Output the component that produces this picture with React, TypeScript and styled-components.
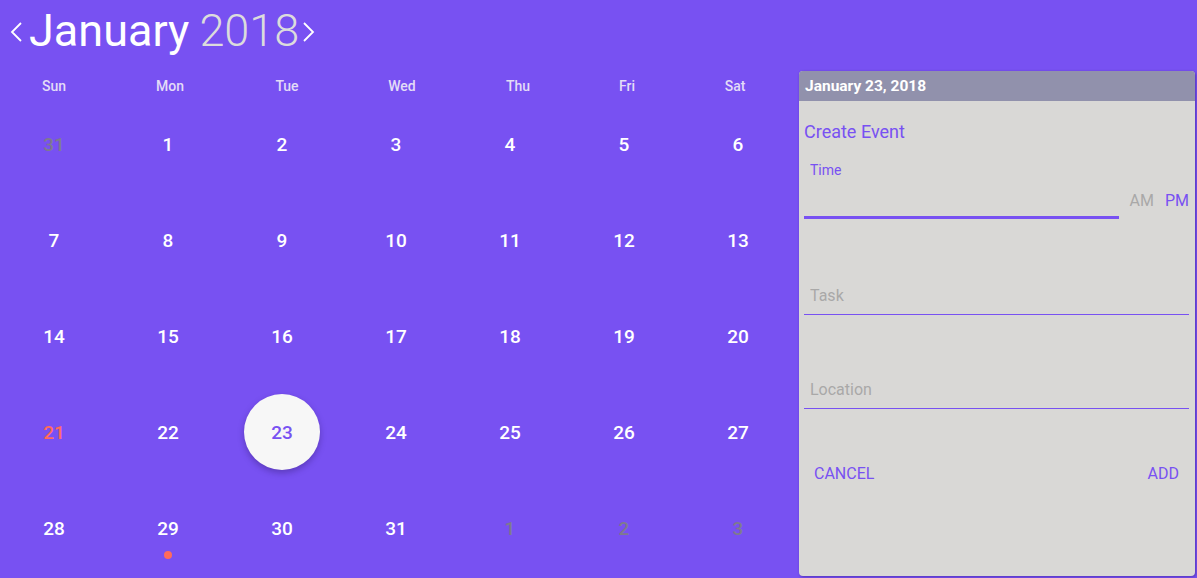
import React from 'react'
import styled, {createGlobalStyle} from "styled-components";

const GlobalStyle = createGlobalStyle`
  body {
    margin: 0;
    background-color: #7851f2;
    font-family: Roboto, "Liberation Sans", sans-serif;
    overflow: hidden;
  }
`;

const purple = '#7851f2';

const StyledPage = styled.div`
  display: flex;
  align-items: flex-start;
  width: 1197px;
  height: 578px;
`

const StyledCalendar = styled.div`
  width: 799px;
  flex-shrink: 0;
`;

const StyledTitle = styled.div`
  display: flex;
  align-items: center;
  height: 60px;
  padding-left: 9px;
  color: #fff;
  font-size: 45px;
  line-height: 1;
`;

const StyledMonth = styled.span`
  font-weight: 400;
  margin: 0 10px 0 6px;
`;

const StyledYear = styled.span`
  font-weight: 300;
  color: #dcdcdc;
  margin-right: 3px;
`;

const StyledArrow = styled.svg`
  width: 14px;
  height: 20px;
  margin-top: 4px;
`;

const StyledWeekdays = styled.div`
  display: grid;
  grid-template-columns: 108px 124px 110px 120px 112px 106px 110px;
  height: 28px;
  margin-top: 12px;
  align-items: center;
`;

const StyledWeekday = styled.div`
  text-align: center;
  color: #e3dcf7;
  font-size: 14px;
  font-weight: 500;
`;

const StyledDays = styled.div`
  display: grid;
  grid-template-columns: repeat(7, 114px);
  grid-auto-rows: 96px;
  margin-left: -3px;
`;

const StyledCell = styled.div`
  position: relative;
  display: flex;
  justify-content: center;
  padding-top: 6px;
`;

const StyledDay = styled.div<{ $muted?: boolean; $sunday?: boolean; $selected?: boolean }>`
  display: flex;
  align-items: center;
  justify-content: center;
  width: 76px;
  height: 76px;
  border-radius: 50%;
  font-size: 19px;
  font-weight: 500;
  color: ${p => p.$selected ? purple : p.$muted ? '#7f7a8e' : p.$sunday ? '#ff6b5b' : '#fff'};
  background: ${p => p.$selected ? '#f7f7f7' : 'transparent'};
  box-shadow: ${p => p.$selected ? '0 3px 6px rgba(40, 20, 90, 0.35)' : 'none'};
`;

const StyledDot = styled.span`
  position: absolute;
  left: 50%;
  top: 67px;
  width: 8px;
  height: 8px;
  margin-left: -4px;
  border-radius: 50%;
  background: #ff6b5b;
`;

const StyledPanel = styled.div`
  width: 396px;
  height: 505px;
  margin-top: 71px;
  border-radius: 4px;
  overflow: hidden;
  background: #d9d8d6;
  box-shadow: 1px 1px 3px rgba(40, 20, 110, 0.45);
`;

const StyledPanelHeader = styled.div`
  height: 30px;
  line-height: 30px;
  padding-left: 6px;
  background: #9191ac;
  color: #fff;
  font-size: 15.5px;
  font-weight: 700;
`;

const StyledPanelBody = styled.div`
  display: flex;
  flex-direction: column;
  padding: 0 6px 0 5px;
`;

const StyledHeading = styled.h3`
  margin: 20px 0 0 0;
  font-size: 18px;
  line-height: 22px;
  font-weight: 400;
  color: ${purple};
`;

const StyledLabel = styled.div`
  margin-top: 19px;
  padding-left: 6px;
  font-size: 14px;
  line-height: 16px;
  color: ${purple};
`;

const StyledTimeRow = styled.div`
  display: flex;
  align-items: center;
  height: 41px;
`;

const StyledTimeInput = styled.div`
  width: 315px;
  height: 100%;
  box-sizing: border-box;
  border-bottom: 3px solid ${purple};
`;

const StyledMeridiem = styled.span<{ $active?: boolean }>`
  margin-left: 11px;
  margin-top: 4px;
  font-size: 16px;
  color: ${p => p.$active ? purple : '#a9a8a8'};
`;

const StyledInput = styled.input<{ $gap: number }>`
  margin-top: ${p => p.$gap}px;
  height: 39px;
  box-sizing: border-box;
  padding: 0 6px;
  border: none;
  border-bottom: 1px solid ${purple};
  background: transparent;
  font-family: inherit;
  font-size: 16px;
  outline: none;
  &::placeholder {
    color: #a9a8a8;
  }
`;

const StyledActions = styled.div`
  display: flex;
  justify-content: space-between;
  margin-top: 46px;
`;

const StyledAction = styled.button`
  height: 36px;
  padding: 0 10px;
  border: none;
  background: transparent;
  font-family: inherit;
  font-size: 16px;
  color: ${purple};
  text-transform: uppercase;
`;

const weekdays = ['Sun', 'Mon', 'Tue', 'Wed', 'Thu', 'Fri', 'Sat'];

interface Day {
    n: number,
    muted?: boolean
}

const days: Day[] = [
    {n: 31, muted: true},
    ...Array.from({length: 31}, (_, i) => ({n: i + 1})),
    {n: 1, muted: true},
    {n: 2, muted: true},
    {n: 3, muted: true},
];

const Arrow: React.FC<{ dir: 'left' | 'right' }> = ({dir}) => (
    <StyledArrow viewBox="0 0 14 20">
        <path
            d={dir === 'left' ? 'M12 1 L3 10 L12 19' : 'M2 1 L11 10 L2 19'}
            fill="none" stroke="#fff" strokeWidth="1.8"
        />
    </StyledArrow>
);

export default function App() {
    return (
        <>
            <GlobalStyle/>
            <StyledPage>
                <StyledCalendar>
                    <StyledTitle>
                        <Arrow dir="left"/>
                        <StyledMonth>January</StyledMonth>
                        <StyledYear>2018</StyledYear>
                        <Arrow dir="right"/>
                    </StyledTitle>
                    <StyledWeekdays>
                        {weekdays.map(w => <StyledWeekday key={w}>{w}</StyledWeekday>)}
                    </StyledWeekdays>
                    <StyledDays>
                        {days.map((d, i) => (
                            <StyledCell key={i}>
                                <StyledDay
                                    $muted={d.muted}
                                    $sunday={!d.muted && d.n === 21}
                                    $selected={!d.muted && d.n === 23}
                                >
                                    {d.n}
                                </StyledDay>
                                {!d.muted && d.n === 29 && <StyledDot/>}
                            </StyledCell>
                        ))}
                    </StyledDays>
                </StyledCalendar>
                <StyledPanel>
                    <StyledPanelHeader>January 23, 2018</StyledPanelHeader>
                    <StyledPanelBody>
                        <StyledHeading>Create Event</StyledHeading>
                        <StyledLabel>Time</StyledLabel>
                        <StyledTimeRow>
                            <StyledTimeInput/>
                            <StyledMeridiem>AM</StyledMeridiem>
                            <StyledMeridiem $active>PM</StyledMeridiem>
                        </StyledTimeRow>
                        <StyledInput $gap={57} placeholder="Task"/>
                        <StyledInput $gap={55} placeholder="Location"/>
                        <StyledActions>
                            <StyledAction>Cancel</StyledAction>
                            <StyledAction>Add</StyledAction>
                        </StyledActions>
                    </StyledPanelBody>
                </StyledPanel>
            </StyledPage>
        </>
    )
}
